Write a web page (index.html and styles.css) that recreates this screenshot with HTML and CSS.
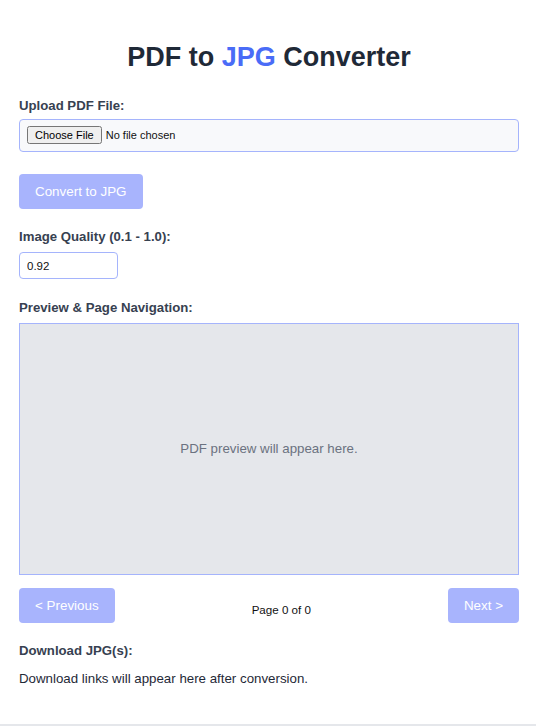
FILE: index.html
```html
<!DOCTYPE html>
<html lang="en">
<head>
    <meta charset="UTF-8">
    <meta name="viewport" content="width=device-width, initial-scale=1.0">
    <title>PDF to JPG Converter</title>
    <link rel="stylesheet" href="styles.css">
</head>
<body>
    <div class="container">
        <h1 class="title">PDF to <span class="accent">JPG</span> Converter</h1>

        <!--上传-->
        <label class="label" for="pdfFile">Upload PDF File:</label>
        <input type="file" id="pdfFile" class="file-input" accept="application/pdf">

        <button class="btn convert" disabled>Convert to JPG</button>

        <label class="label" for="quality">Image Quality (0.1 - 1.0):</label>
        <input type="text" id="quality" class="quality-input" value="0.92">

        <!--预览-->
        <div class="label">Preview &amp; Page Navigation:</div>
        <div class="preview">
            <p class="placeholder">PDF preview will appear here.</p>
        </div>
        <div class="nav">
            <button class="btn" disabled>&lt; Previous</button>
            <span class="page-info">Page 0 of 0</span>
            <button class="btn" disabled>Next &gt;</button>
        </div>

        <!--下载-->
        <div class="label download-label">Download JPG(s):</div>
        <p class="download-text">Download links will appear here after conversion.</p>
    </div>
</body>
</html>
```

FILE: styles.css
```css
*{
    margin: 0;
    padding: 0;
    box-sizing: border-box;
}
body{
    font-family: "Liberation Sans", Arial, sans-serif;
    background-color: #ffffff;
    color: #374151;
}
.container{
    width: 100%;
    min-height: 726px;
    padding: 41px 17px 20px 19px;
    border-bottom: 2px solid #e5e7eb;
    display: flex;
    flex-direction: column;
    align-items: flex-start;
}
.title{
    align-self: stretch;
    text-align: center;
    font-size: 27px;
    line-height: 32px;
    font-weight: bold;
    color: #1f2937;
    margin-bottom: 25px;
}
.title .accent{
    color: #4a6cf7;
}
.label{
    display: block;
    font-size: 13.2px;
    line-height: 16px;
    font-weight: bold;
    color: #374151;
    margin-bottom: 5px;
}
.file-input{
    align-self: stretch;
    font-family: "Liberation Sans", Arial, sans-serif;
    font-size: 11px;
    color: #111111;
    background-color: #f8f9fb;
    border: 1px solid #a5b4fc;
    border-radius: 4px;
    padding: 6px 7px;
    height: 33px;
    margin-bottom: 22px;
}
.btn{
    font-family: "Liberation Sans", Arial, sans-serif;
    font-size: 13.4px;
    line-height: 15px;
    color: #ffffff;
    background-color: #a8b4fd;
    border: none;
    border-radius: 4px;
    padding: 10px 16px;
}
.convert{
    margin-bottom: 20px;
}
.quality-input{
    width: 99px;
    height: 27px;
    font-family: "Liberation Sans", Arial, sans-serif;
    font-size: 11.5px;
    color: #111111;
    border: 1px solid #a5b4fc;
    border-radius: 4px;
    padding: 0 7px;
    margin-top: 2px;
    margin-bottom: 21px;
}
.preview{
    align-self: stretch;
    height: 252px;
    margin-top: 2px;
    background-color: #e5e7eb;
    border: 1px solid #a5b4fc;
    display: flex;
    align-items: center;
    justify-content: center;
}
.placeholder{
    font-size: 13.3px;
    line-height: 16px;
    color: #6b7280;
}
.nav{
    align-self: stretch;
    display: flex;
    justify-content: space-between;
    align-items: center;
    margin-top: 13px;
}
.page-info{
    font-size: 11.6px;
    color: #111111;
    padding-top: 8px;
}
.download-label{
    margin-top: 20px;
    margin-bottom: 12px;
}
.download-text{
    font-size: 13.3px;
    line-height: 16px;
    color: #1f2937;
}
```
